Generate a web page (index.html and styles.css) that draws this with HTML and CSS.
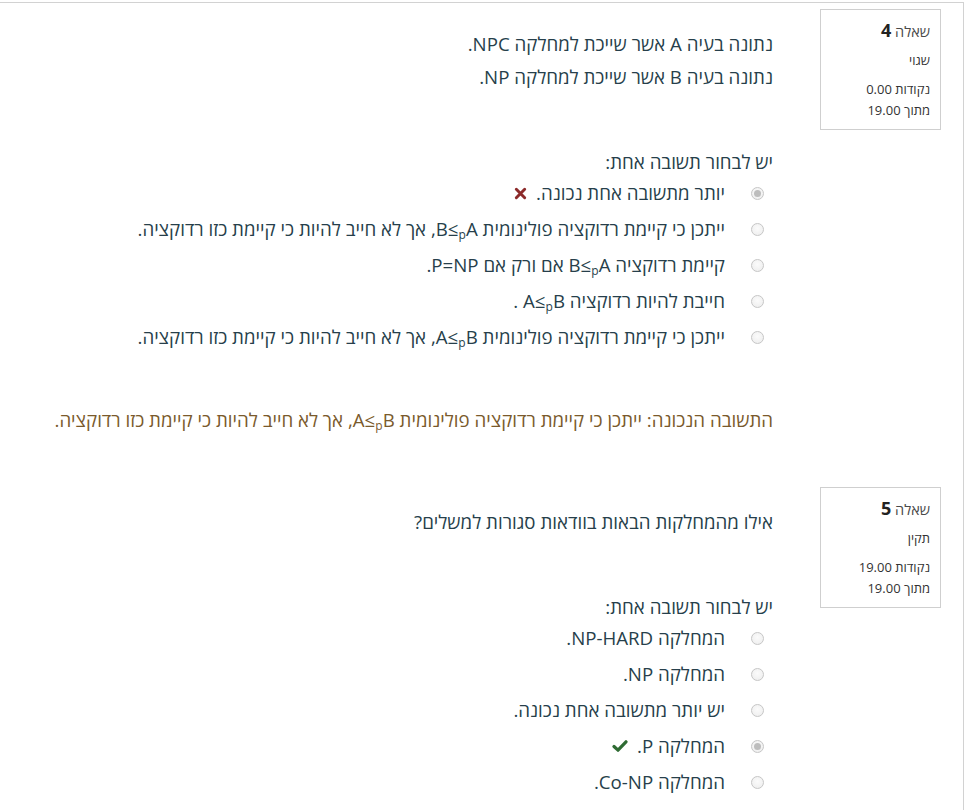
FILE: index.html
```html
<!DOCTYPE html>
<html lang="he">
<head>
<meta charset="utf-8">
<title>סקירת בוחן</title>
<link rel="stylesheet" href="styles.css">
</head>
<body>
<div class="page">
  <div class="que" dir="rtl">
    <div class="info">
      <h3 class="no">שאלה <span class="qno">4</span></h3>
      <div class="state">שגוי</div>
      <div class="grade"><div>נקודות 0.00</div><div>מתוך 19.00</div></div>
    </div>
    <div class="content">
      <div class="qtext">
        <p>נתונה בעיה A אשר שייכת למחלקה NPC.</p>
        <p>נתונה בעיה B אשר שייכת למחלקה NP.</p>
      </div>
      <div class="prompt">יש לבחור תשובה אחת:</div>
      <div class="answer">
        <div class="opt"><span class="radio checked"></span><span class="label">יותר מתשובה אחת נכונה.</span><svg class="icon wrong" viewBox="0 0 14 14" width="13" height="13"><path d="M2.5 2.5 L11.5 11.5 M11.5 2.5 L2.5 11.5" stroke="currentColor" stroke-width="3.2" stroke-linecap="round" fill="none"/></svg></div>
        <div class="opt"><span class="radio"></span><span class="label">ייתכן כי קיימת רדוקציה פולינומית B≤<sub>p</sub>A, אך לא חייב להיות כי קיימת כזו רדוקציה.</span></div>
        <div class="opt"><span class="radio"></span><span class="label">קיימת רדוקציה B≤<sub>p</sub>A אם ורק אם P=NP.</span></div>
        <div class="opt"><span class="radio"></span><span class="label">חייבת להיות רדוקציה A≤<sub>p</sub>B .</span></div>
        <div class="opt"><span class="radio"></span><span class="label">ייתכן כי קיימת רדוקציה פולינומית A≤<sub>p</sub>B, אך לא חייב להיות כי קיימת כזו רדוקציה.</span></div>
      </div>
      <div class="rightanswer">התשובה הנכונה: ייתכן כי קיימת רדוקציה פולינומית A≤<sub>p</sub>B, אך לא חייב להיות כי קיימת כזו רדוקציה.</div>
    </div>
  </div>

  <div class="que" dir="rtl">
    <div class="info">
      <h3 class="no">שאלה <span class="qno">5</span></h3>
      <div class="state">תקין</div>
      <div class="grade"><div>נקודות 19.00</div><div>מתוך 19.00</div></div>
    </div>
    <div class="content">
      <div class="qtext">
        <p>אילו מהמחלקות הבאות בוודאות סגורות למשלים?</p>
      </div>
      <div class="prompt">יש לבחור תשובה אחת:</div>
      <div class="answer">
        <div class="opt"><span class="radio"></span><span class="label">המחלקה NP-HARD.</span></div>
        <div class="opt"><span class="radio"></span><span class="label">המחלקה NP.</span></div>
        <div class="opt"><span class="radio"></span><span class="label">יש יותר מתשובה אחת נכונה.</span></div>
        <div class="opt"><span class="radio checked"></span><span class="label">המחלקה P.</span><svg class="icon right" viewBox="0 0 16 14" width="16" height="14"><path d="M2 7.5 L6 11.2 L14 2.8" stroke="currentColor" stroke-width="3.2" stroke-linecap="round" stroke-linejoin="round" fill="none"/></svg></div>
        <div class="opt"><span class="radio"></span><span class="label">המחלקה Co-NP.</span></div>
      </div>
    </div>
  </div>
</div>
</body>
</html>
```

FILE: styles.css
```css
html, body {
  margin: 0;
  padding: 0;
  background: #ffffff;
}

body {
  font-family: "Open Sans", "DejaVu Sans", sans-serif;
  color: #273f4b;
  width: 967px;
  height: 810px;
  overflow: hidden;
}

.page {
  margin-top: 2px;
  width: 963px;
  min-height: 900px;
  border-top: 1px solid #d2d2d2;
  border-right: 1px solid #d2d2d2;
}

.que {
  display: flex;
  flex-direction: row;
  align-items: flex-start;
  margin-top: 6px;
}

.que + .que {
  margin-top: 56px;
}

.info {
  box-sizing: border-box;
  width: 121px;
  margin-right: 22px;
  border: 1px solid #cfcfcf;
  background: #ffffff;
  padding: 8px 10px 8px 6px;
  color: #333333;
  flex: none;
}

.no {
  margin: 0;
  font-size: 14.5px;
  font-weight: normal;
  line-height: 24px;
  color: #4a4a4a;
}

.qno {
  font-size: 18px;
  font-weight: bold;
  color: #222222;
}

.state {
  margin-top: 6px;
  font-size: 13px;
  line-height: 20px;
  color: #333333;
}

.grade {
  margin-top: 9px;
  font-size: 13px;
  line-height: 21px;
  color: #333333;
}

.content {
  flex: 1;
  margin-right: 47px;
  padding-top: 24px;
  padding-left: 10px;
  font-size: 18.7px;
  line-height: 22px;
}

.qtext p {
  margin: 0 0 11px 0;
}

.qtext p:last-child {
  margin-bottom: 0;
}

.prompt {
  margin-top: 63px;
  margin-bottom: 2px;
}

.opt {
  display: flex;
  flex-direction: row;
  align-items: center;
  height: 36px;
  padding-right: 9px;
}

.radio {
  box-sizing: border-box;
  width: 13px;
  height: 13px;
  border-radius: 50%;
  border: 1px solid #c6c6c6;
  background: radial-gradient(circle at 50% 40%, #fbfbfb 0%, #ececec 100%);
  margin-left: 26px;
  flex: none;
  display: flex;
  align-items: center;
  justify-content: center;
}

.radio.checked::after {
  content: "";
  width: 7px;
  height: 7px;
  border-radius: 50%;
  background: #bdbdbd;
}

.label {
  white-space: nowrap;
}

sub {
  font-size: 12px;
  line-height: 0;
  vertical-align: -3px;
}

.icon {
  margin-right: 9px;
  flex: none;
}

.icon.wrong {
  color: #8c2a2a;
}

.icon.right {
  color: #2f6b33;
}

.rightanswer {
  margin-top: 54px;
  color: #7a5a2c;
  white-space: nowrap;
}
```
